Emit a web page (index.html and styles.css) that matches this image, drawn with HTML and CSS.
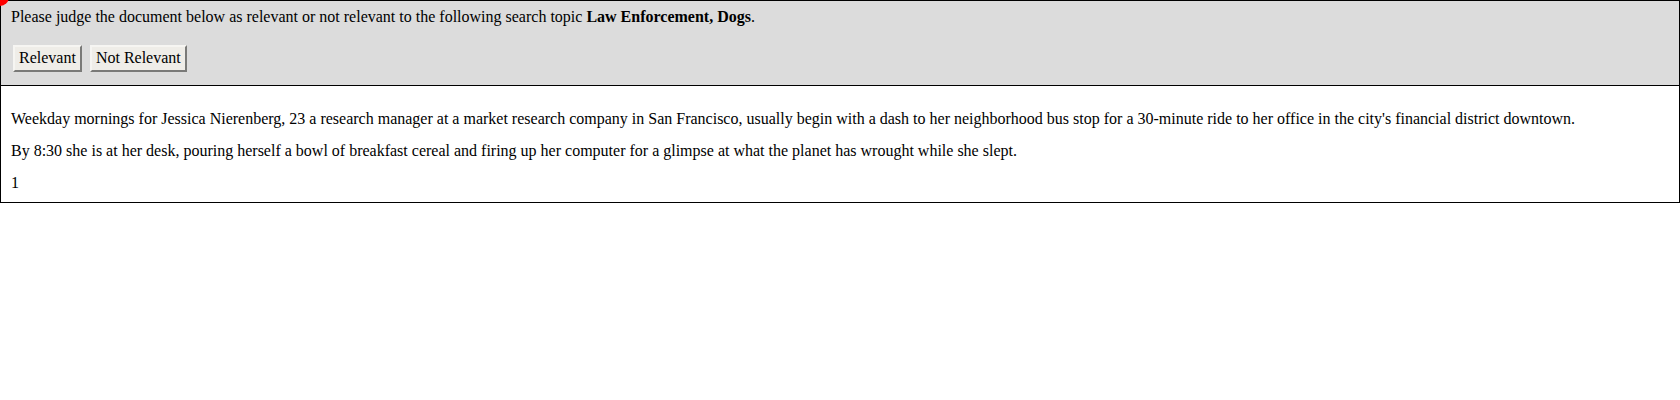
FILE: index.html
```html
<!DOCTYPE html>
<html>
<head>
<meta charset="utf-8">
<link rel="stylesheet" href="styles.css">
</head>
<body>
<div class="dot"></div>
<div class="panel">
  <div class="header">
    <p class="prompt">Please judge the document below as relevant or not relevant to the following search topic <b>Law Enforcement, Dogs</b>.</p>
    <div class="actions">
      <button class="btn">Relevant</button>
      <button class="btn">Not Relevant</button>
    </div>
  </div>
  <div class="doc">
    <p>Weekday mornings for Jessica Nierenberg, 23 a research manager at a market research company in San Francisco, usually begin with a dash to her neighborhood bus stop for a 30-minute ride to her office in the city's financial district downtown.</p>
    <p>By 8:30 she is at her desk, pouring herself a bowl of breakfast cereal and firing up her computer for a glimpse at what the planet has wrought while she slept.</p>
    <p>1</p>
  </div>
</div>
</body>
</html>
```

FILE: styles.css
```css
html, body {
  margin: 0;
  padding: 0;
  background: #fff;
}
body {
  font-family: "Liberation Serif", "Times New Roman", serif;
  font-size: 16px;
  line-height: 18px;
  color: #000;
}
.dot {
  position: absolute;
  z-index: 2;
  left: -9px;
  top: -12px;
  width: 18px;
  height: 18px;
  border-radius: 50%;
  background: #ff0000;
}
.panel {
  border: 1px solid #000;
}
.header {
  background: #dcdcdc;
  padding: 7px 10px 13px;
  border-bottom: 1px solid #000;
}
.prompt {
  margin: 0;
}
.actions {
  display: flex;
  gap: 8px;
  margin-top: 19px;
  padding-left: 2px;
}
.btn {
  font-family: "Liberation Serif", "Times New Roman", serif;
  font-size: 16px;
  line-height: 18px;
  color: #000;
  background: #efede8;
  border: 2px solid #c8c6c2;
  border-top-color: #f6f5f2;
  border-left-color: #f6f5f2;
  border-right-color: #7a7a78;
  border-bottom-color: #7a7a78;
  padding: 2px 4px 3px;
  margin: 0;
  border-radius: 0;
}
.doc {
  padding: 10px 10px 10px;
}
.doc p {
  margin: 14px 0 0;
}
```
